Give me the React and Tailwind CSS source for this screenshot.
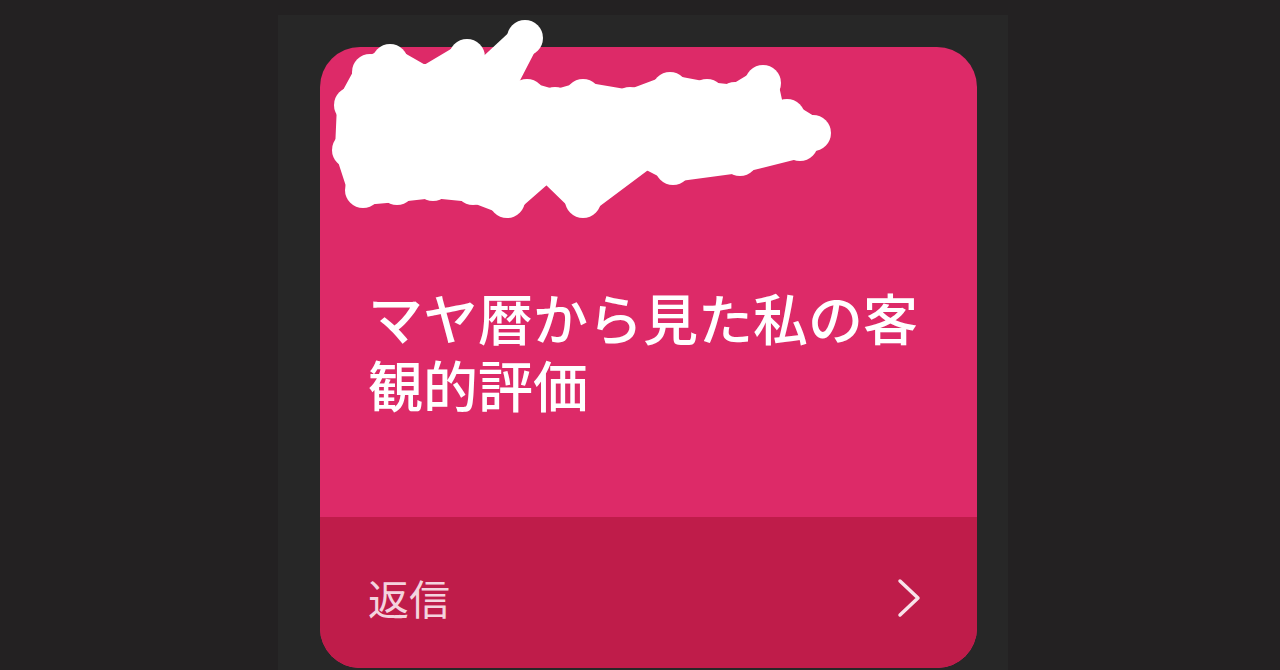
const scribbleTop = [
  [352, 105], [370, 72], [390, 62], [425, 82], [467, 57], [482, 78], [525, 38], [495, 96],
  [527, 97], [555, 105], [583, 97], [630, 105], [670, 90], [707, 97], [735, 100],
  [763, 83], [770, 115], [787, 117], [813, 133],
];
const scribbleBottom = [
  [800, 143], [740, 158], [673, 167], [640, 150], [583, 200], [547, 165],
  [507, 200], [473, 187], [433, 183], [397, 187], [363, 190], [350, 150],
];

export default function App() {
  const outline = [...scribbleTop, ...scribbleBottom];
  const pts = outline.map(([x, y]) => `${x},${y}`).join(' ');

  return (
    <div className="relative h-[670px] w-full overflow-hidden bg-[#232122]" style={{ fontFamily: '"Noto Sans CJK JP", "Noto Sans", sans-serif' }}>
      <div className="ml-[278px] mt-[15px] h-[655px] w-[730px] bg-[#272727] pl-[42px] pt-[32px]">
        <div className="flex h-[621px] w-[657px] flex-col overflow-hidden rounded-[40px] bg-[#dd2a68]">
          {/* top: title */}
          <div className="flex-1 px-[48px] pt-[236px]">
            <h1 className="text-[55px] font-medium leading-[67px] text-white">
              マヤ暦から見た私の客
              <br />
              観的評価
            </h1>
          </div>

          {/* bottom: reply row */}
          <div className="flex h-[151px] items-center justify-between bg-[#bf1c4a] pl-[48px] pr-[56px] pt-[10px]">
            <span className="text-[41px] leading-none text-[#f4d3de]">返信</span>
            <svg width="24" height="40" viewBox="0 0 24 40" fill="none">
              <polyline points="3,3 21,20 3,37" stroke="#f8e3ea" strokeWidth="3.5" strokeLinecap="round" strokeLinejoin="round" />
            </svg>
          </div>
        </div>
      </div>

      {/* redaction scribble drawn over the card */}
      <svg className="pointer-events-none absolute left-0 top-0" width="1280" height="670" viewBox="0 0 1280 670">
        <g fill="#ffffff" stroke="#ffffff" strokeWidth="30" strokeLinecap="round" strokeLinejoin="round">
          <polygon points={pts} />
          <polyline fill="none" points="365,190 440,135 482,85" />
          <polyline fill="none" points="433,183 527,97" />
          <polyline fill="none" points="507,200 583,100" />
          <polyline fill="none" points="583,200 670,135 670,90" />
          <polyline fill="none" points="680,160 763,85" />
        </g>
        <g fill="#ffffff">
          {outline.map(([x, y], i) => (
            <circle key={i} cx={x} cy={y} r="18" />
          ))}
        </g>
      </svg>
    </div>
  );
}
